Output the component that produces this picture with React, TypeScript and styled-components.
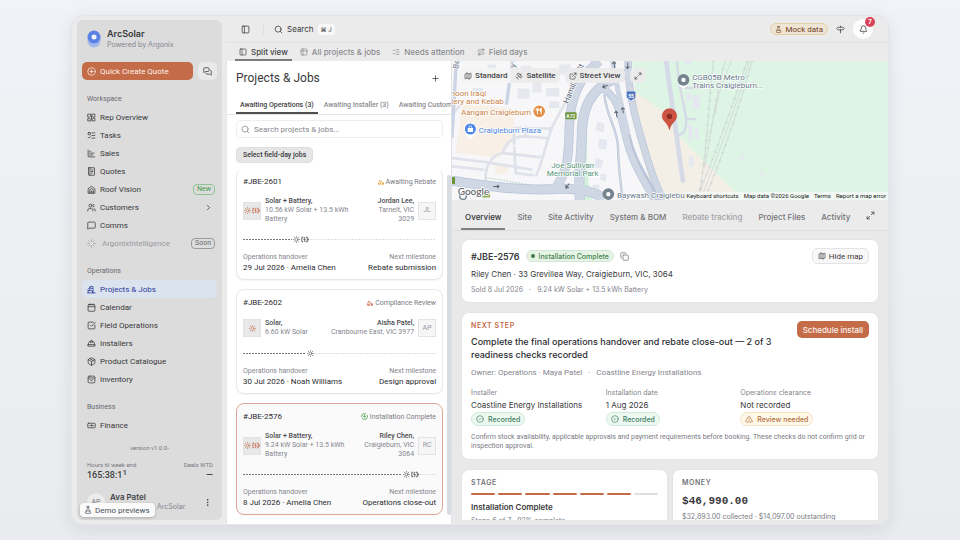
import React from "react";
import styled, { createGlobalStyle, css } from "styled-components";
import {
  Banknote, Bell, Calendar, ChartBar, ChevronRight, CircleCheck, CirclePlus, Copy, EllipsisVertical,
  ExternalLink, FlaskConical, HardHat, ListChecks, ListTodo, Loader, Map as MapIcon, Maximize2,
  MessageSquare, MessagesSquare, Package, PanelLeft, Plus, Route, Satellite, Search, Signpost,
  SquareCheckBig, Table2, TriangleAlert, Users,
} from "lucide-react";

const GlobalStyle = createGlobalStyle`
  * { box-sizing: border-box; }
  body {
    margin: 0;
    background: linear-gradient(#f0f3f7, #eceef1 60%, #e9ebee);
    font-family: Inter, "Liberation Sans", sans-serif;
    color: #3a3a3c;
    font-size: 8px;
  }
  button, input { font: inherit; color: inherit; margin: 0; }
  button { border: 0; padding: 0; background: none; display: inline-flex; align-items: center; justify-content: center; white-space: nowrap; }
  a { color: inherit; text-decoration: none; }
  p, h1, h2, h3, dl, dt, dd, ul { margin: 0; padding: 0; }
  ul { list-style: none; }
  svg { flex: none; display: block; }
`;

const muted = "#85858d";
const rust = "#c46b48";
const compact = css`font-family: Roboto, "Liberation Sans", sans-serif;`;

const Shell = styled.div`
  height: 100vh;
  min-height: 480px;
  padding: 15px 71px;
`;
const Window = styled.div`
  position: relative;
  display: flex;
  height: 100%;
  overflow: hidden;
  border: 1px solid #e3e5e8;
  border-radius: 12px;
  background: #ebebeb;
`;
const WindowShadow = styled.div`
  height: 100%;
  border-radius: 12px;
  box-shadow: 0 4px 16px rgba(70, 80, 95, 0.12);
`;

/* Sidebar */
const Sidebar = styled.aside`
  ${compact}
  display: flex;
  flex-direction: column;
  flex: none;
  width: 145px;
  margin: 4px 4px 4px 5px;
  padding: 6px 5px 8px;
  border-radius: 6px;
  background: #dcdcdc;
`;
const Brand = styled.div`
  display: flex;
  align-items: center;
  gap: 6px;
  height: 26px;
  padding-left: 5px;
  font-family: Inter, sans-serif;
`;
const BrandName = styled.div`
  font-size: 9px;
  line-height: 11px;
  font-weight: 600;
`;
const BrandSub = styled.div`
  font-size: 7px;
  line-height: 11px;
  color: ${muted};
`;
const QuickRow = styled.div`
  display: flex;
  gap: 5px;
  height: 18px;
  margin-top: 10px;
`;
const QuickButton = styled.button`
  flex: 1;
  gap: 4px;
  && { justify-content: flex-start; padding-left: 5px; background: ${rust}; color: #fdf1eb; }
  border-radius: 5px;
`;
const ChatButton = styled.button`
  width: 19px;
  && { background: #e9e9e9; }
  border-radius: 5px;
`;
const NavGroup = styled.nav`
  margin-top: 10px;
`;
const NavLabel = styled.h2`
  padding-left: 5px;
  font-size: 7px;
  line-height: 18px;
  font-weight: 400;
  color: #68686d;
`;
const NavItem = styled.a<{ $active?: boolean; $dim?: boolean }>`
  display: flex;
  align-items: center;
  gap: 4px;
  height: 18px;
  padding: 0 2px 0 5px;
  border-radius: 5px;
  color: #38383b;
  ${(p) => p.$active && css`background: #dbe3ee; color: #2c3a9a;`}
  ${(p) => p.$dim && css`color: #98989c; gap: 6px;`}
  span { flex: 1; white-space: nowrap; }
  span + svg { margin-right: 2px; }
`;
const NavBadge = styled.em<{ $green?: boolean }>`
  padding: 0 3px;
  border: 1px solid ${(p) => (p.$green ? "#8cc490" : "#9b9ba3")};
  border-radius: 4px;
  font-style: normal;
  font-size: 7px;
  line-height: 9px;
  color: ${(p) => (p.$green ? "#479a4e" : "#68686f")};
`;
const Version = styled.div`
  margin-top: auto;
  text-align: center;
  font-size: 6px;
  line-height: 10px;
  color: #77777e;
`;
const Metrics = styled.div`
  display: flex;
  justify-content: space-between;
  padding: 7px 4px 0 5px;
`;
const Metric = styled.div<{ $right?: boolean }>`
  font-size: 6px;
  line-height: 9px;
  color: #77777e;
  text-align: ${(p) => (p.$right ? "right" : "left")};
`;
const MetricValue = styled.strong`
  display: flex;
  font-size: 9px;
  line-height: 12px;
  font-weight: 500;
  color: #3f3f43;
  sup { font-size: 8px; line-height: 8px; }
`;
const DashValue = styled(MetricValue)`
  justify-content: flex-end;
`;
const UserRow = styled.div`
  display: flex;
  align-items: center;
  gap: 5px;
  padding: 11px 5px 0;
`;
const UserAvatar = styled.div`
  display: grid;
  place-items: center;
  width: 18px;
  height: 18px;
  border-radius: 9px;
  background: #ececec;
  font-size: 7px;
  color: #77777c;
`;
const UserText = styled.div`
  flex: 1;
  font: 400 7px/10px Inter, sans-serif;
  white-space: nowrap;
  color: #85858d;
  strong { display: block; font-size: 8px; font-weight: 600; color: #444448; }
  span { display: block; padding-left: 43px; }
`;
const DemoButton = styled.button`
  position: absolute;
  left: 8px;
  bottom: 7px;
  height: 14px;
  gap: 3px;
  && { ${compact} padding: 0 5px 0 4px; background: #fafafa; color: #46515d; }
  border-radius: 4px;
  box-shadow: 0 1px 3px rgba(0, 0, 0, 0.22);
`;

/* Main frame */
const Main = styled.main`
  display: flex;
  flex-direction: column;
  flex: 1;
  min-width: 0;
`;
const TopBar = styled.header`
  display: flex;
  align-items: center;
  flex: none;
  height: 27px;
  padding: 0 15px 0 15px;
  border-bottom: 1px solid #e0e1e4;
`;
const Divider = styled.i`
  width: 1px;
  height: 10px;
  margin: 0 10px 0 13px;
  background: #dcdde0;
`;
const SearchButton = styled.button`
  gap: 4px;
`;
const Kbd = styled.kbd`
  padding: 0 3px;
  border-radius: 3px;
  background: #f8f8f8;
  font-family: inherit;
  font-size: 6px;
  line-height: 11px;
`;
const Spacer = styled.span`
  flex: 1;
`;
const MockPill = styled.span`
  ${compact}
  display: flex;
  align-items: center;
  gap: 3px;
  height: 12px;
  padding: 0 4px;
  margin-right: 8px;
  border: 1px solid #e6cfa6;
  border-radius: 6px;
  background: #efe5d5;
  color: #703f1c;
`;
const BellButton = styled.button`
  position: relative;
  width: 20px;
  height: 20px;
  && { margin-left: 8px; background: #fdfdfd; }
  border-radius: 10px;
`;
const BellCount = styled.b`
  position: absolute;
  top: -2px;
  right: -2px;
  width: 10px;
  border-radius: 5px;
  background: #d94459;
  color: #fff;
  font-size: 6px;
  line-height: 10px;
`;
const ViewTabs = styled.nav`
  display: flex;
  flex: none;
  gap: 4px;
  height: 18px;
  padding-left: 9px;
`;
const ViewTab = styled.a<{ $active?: boolean }>`
  display: flex;
  align-items: center;
  gap: 4px;
  padding: 2px 4px 0;
  font-weight: 500;
  white-space: nowrap;
  color: ${(p) => (p.$active ? "#444448" : "#8b8b90")};
  border-bottom: 2px solid ${(p) => (p.$active ? "#7c7c80" : "transparent")};
`;
const Split = styled.div`
  display: flex;
  flex: 1;
  min-height: 0;
`;

/* Job list */
const ListPane = styled.section`
  ${compact}
  display: flex;
  flex-direction: column;
  flex: 0 0 34%;
  min-width: 0;
  border-left: 1px solid #e6e6e8;
  background: #fff;
`;
const ListHead = styled.div`
  display: flex;
  justify-content: space-between;
  align-items: center;
  flex: none;
  height: 34px;
  padding: 0 11px 0 9px;
  h1 { font-size: 12px; font-weight: 400; }
`;
const QueueTabs = styled.div`
  display: flex;
  flex: none;
  height: 20px;
  gap: 2px;
  padding-left: 9px;
  overflow: hidden;
  border-bottom: 1px solid #e4e4e6;
`;
const QueueTab = styled.button<{ $active?: boolean }>`
  flex: none;
  && {
    padding: 3px 4px 0;
    border-bottom: 2px solid ${(p) => (p.$active ? "#505054" : "transparent")};
    font-size: 7px;
    font-weight: 500;
    color: ${(p) => (p.$active ? "#3f3f43" : "#8b8b90")};
  }
`;
const SearchBox = styled.label`
  display: flex;
  align-items: center;
  flex: none;
  gap: 4px;
  height: 18px;
  margin: 5px 8px 9px 9px;
  padding: 0 4px;
  border: 1px solid #eeeef0;
  border-radius: 5px;
  color: ${muted};
  input { flex: 1; min-width: 0; border: 0; padding: 0; outline: 0; background: none; }
  input::placeholder { color: ${muted}; opacity: 1; }
`;
const SelectButton = styled.button`
  flex: none;
  align-self: flex-start;
  height: 16px;
  && { margin: 0 9px 8px; padding: 0 7px; background: #e6e6e6; font-size: 7px; font-weight: 500; }
  border-radius: 5px;
  box-shadow: inset 0 0 0 1px #dedede;
`;
const ScrollArea = styled.div`
  display: flex;
  flex: 1;
  min-height: 0;
  overflow: hidden;
`;
const Cards = styled.ul`
  display: flex;
  flex-direction: column;
  flex: 1;
  min-width: 0;
  gap: 9px;
  && { margin: -3px 4px 0 9px; }
`;
const ScrollThumb = styled.i`
  width: 4px;
  margin: 4px 0 9px 0;
  border-radius: 2px;
  background: #d6dce2;
`;
const JobCard = styled.li<{ $selected?: boolean }>`
  flex: none;
  padding: 7px 6px 6px;
  border: 1px solid ${(p) => (p.$selected ? "#dfa793" : "#e8e8ea")};
  border-radius: 8px;
  background: ${(p) => (p.$selected ? "#fafafa" : "#fff")};
  box-shadow: 0 1px 1px rgba(0, 0, 0, 0.04);
`;
const JobTop = styled.div`
  display: flex;
  justify-content: space-between;
  align-items: center;
  height: 11px;
  h2 { font-size: 8px; font-weight: 400; color: #2c2c30; }
`;
const JobStatus = styled.span`
  display: flex;
  align-items: center;
  gap: 2px;
  font-size: 7px;
  color: #7b7b84;
`;
const JobBody = styled.div`
  display: flex;
  align-items: center;
  gap: 4px;
  min-height: 20px;
  margin: 10px 0;
  font-size: 7px;
  line-height: 9px;
  color: ${muted};
  strong { display: block; font-weight: 500; color: #4a4a4e; }
`;
const JobText = styled.div`
  max-width: 90px;
  margin-right: auto;
`;
const PlaceText = styled.div<{ $narrow?: boolean }>`
  max-width: ${(p) => (p.$narrow ? "52px" : "none")};
  white-space: ${(p) => (p.$narrow ? "normal" : "nowrap")};
  text-align: right;
`;
const Tile = styled.div<{ $light?: boolean }>`
  display: flex;
  align-items: center;
  justify-content: center;
  flex: none;
  gap: 1px;
  width: 18px;
  height: 18px;
  border: 1px solid #e3e3e5;
  background: ${(p) => (p.$light ? "#f6f6f7" : "#e8e8e8")};
  color: ${(p) => (p.$light ? "#96969c" : rust)};
`;
const Track = styled.div`
  display: flex;
  align-items: center;
  gap: 1px;
  height: 11px;
  color: #4c4c50;
`;
const Dashes = styled.i<{ $grow: number; $faint?: boolean }>`
  flex: ${(p) => p.$grow} 1 0;
  height: 1px;
  background: repeating-linear-gradient(90deg, ${(p) => (p.$faint ? "#dfdfe1" : "#77777b")} 0 2px, transparent 2px 3px);
`;
const JobFoot = styled.dl`
  display: flex;
  justify-content: space-between;
  && { margin-top: 8px; }
  div:last-child { text-align: right; }
  dt { font-size: 7px; line-height: 9px; color: ${muted}; }
  dd { font-size: 8px; line-height: 11px; color: #2c2c30; }
`;

/* Detail */
const Detail = styled.section`
  display: flex;
  flex-direction: column;
  flex: 1;
  min-width: 0;
  border-left: 1px solid #dfe2e6;
  background: #e9e9e9;
`;
const MapBox = styled.div`
  position: relative;
  flex: none;
  height: 139px;
  overflow: hidden;
  background: #def5e5;
`;
const MapControls = styled.div`
  ${compact}
  position: absolute;
  top: 7px;
  left: 8px;
  display: flex;
  gap: 5px;
`;
const ControlGroup = styled.div`
  display: flex;
  border-radius: 5px;
  background: #ececec;
  opacity: 0.95;
  overflow: hidden;
`;
const MapControl = styled.button<{ $active?: boolean }>`
  gap: 3px;
  height: 15px;
  && { padding: 0 4px; background: ${(p) => (p.$active ? "#f5f5f5" : "transparent")}; font-weight: 500; }
`;
const MapLegal = styled.div`
  position: absolute;
  right: 0;
  bottom: 0;
  display: flex;
  gap: 5px;
  padding: 0 2px;
  background: rgba(245, 248, 246, 0.85);
  font: 400 6px/8px Roboto, sans-serif;
  color: #1b1b1b;
`;
const DetailTabs = styled.nav`
  display: flex;
  align-items: stretch;
  flex: none;
  height: 31px;
  gap: 8px;
  padding: 0 13px 0 9px;
  border-bottom: 1px solid #dedee0;
  background: #ebebeb;
`;
const DetailTab = styled.a<{ $active?: boolean; $dim?: boolean }>`
  display: flex;
  align-items: center;
  padding: 5px 4px 0;
  border-bottom: 2px solid ${(p) => (p.$active ? "#808084" : "transparent")};
  font-weight: 500;
  white-space: nowrap;
  color: ${(p) => (p.$active ? "#303034" : p.$dim ? "#a3a3a8" : "#737378")};
`;
const ExpandButton = styled.button`
  && { margin-left: auto; }
`;
const DetailBody = styled.div`
  display: flex;
  flex-direction: column;
  flex: 1;
  min-height: 0;
  gap: 9px;
  margin: 8px 9px 4px;
  overflow: hidden;
`;
const Card = styled.article`
  flex: none;
  min-width: 0;
  padding: 8px 9px 7px;
  border: 1px solid #e4e4e6;
  border-radius: 8px;
  background: #fff;
`;
const CardHead = styled.div`
  display: flex;
  justify-content: space-between;
  align-items: flex-start;
`;
const JobTitle = styled.div`
  display: flex;
  align-items: center;
  gap: 6px;
  height: 16px;
  h2 { font-size: 9px; font-weight: 600; }
`;
const CopyButton = styled.button`
  && { color: #77777f; }
`;
const StatusPill = styled.span<{ $tone: "green" | "mint" | "amber" }>`
  display: inline-flex;
  align-items: center;
  gap: 4px;
  height: ${(p) => (p.$tone === "green" ? "12px" : "14px")};
  padding: 0 4px;
  border: 1px solid ${(p) => ({ green: "#d3e8d4", mint: "#cfe9da", amber: "#f3e3c2" })[p.$tone]};
  border-radius: 7px;
  background: ${(p) => ({ green: "#e6f3e6", mint: "#edf8f1", amber: "#fef8e9" })[p.$tone]};
  color: ${(p) => ({ green: "#44834b", mint: "#3f8064", amber: "#b4703c" })[p.$tone]};
  && { font-size: 7px; }
  font-weight: 500;
`;
const Dot = styled.i`
  width: 4px;
  height: 4px;
  border-radius: 2px;
  background: #3b7d44;
`;
const HideMap = styled.button`
  gap: 3px;
  height: 16px;
  && { ${compact} padding: 0 5px; background: #f8f8f8; border: 1px solid #e4e4e6; }
  border-radius: 5px;
`;
const Address = styled.p`
  && { margin-top: 4px; }
  font-size: 8px;
  line-height: 13px;
`;
const Meta = styled.p<{ $small?: boolean }>`
  display: flex;
  gap: 6px;
  color: ${muted};
  ${(p) => (p.$small
    ? css`&& { margin-top: 4px; } font-size: 7px; line-height: 10px;`
    : css`&& { margin-top: 6px; } ${compact} font-size: 8px; line-height: 12px;`)}
`;
const Eyebrow = styled.h3<{ $rust?: boolean }>`
  font-size: 7px;
  line-height: 9px;
  font-weight: 600;
  letter-spacing: 0.08em;
  color: ${(p) => (p.$rust ? rust : "#73737a")};
`;
const StepTitle = styled.h2`
  && { margin-top: 5px; }
  max-width: 310px;
  font-size: 9px;
  line-height: 13px;
  font-weight: 500;
  color: #2c2c30;
`;
const ScheduleButton = styled.button`
  height: 17px;
  && { padding: 0 6px; background: ${rust}; color: #fdf3ee; font-weight: 500; }
  border-radius: 5px;
`;
const Checks = styled.dl`
  display: grid;
  grid-template-columns: repeat(3, 1fr);
  gap: 6px;
  && { margin-top: 8px; }
  dt { font-size: 7px; line-height: 12px; color: ${muted}; }
  dd { font-size: 8px; line-height: 13px; }
  div { display: flex; flex-direction: column; align-items: flex-start; }
`;
const Note = styled.p`
  ${compact}
  && { margin-top: 7px; padding-bottom: 1px; }
  font-size: 7px;
  line-height: 9px;
  color: #7b7b84;
`;
const Pair = styled.div`
  display: grid;
  grid-template-columns: 1fr 1fr;
  flex: none;
  gap: 4px;
`;
const Steps = styled.div`
  display: flex;
  gap: 3px;
  margin: 6px 0;
`;
const Step = styled.i<{ $done: boolean }>`
  flex: 1;
  height: 2px;
  border-radius: 1px;
  background: ${(p) => (p.$done ? rust : "#dbe0e5")};
`;
const StageName = styled.p`
  font-size: 8px;
  line-height: 12px;
  font-weight: 600;
`;
const Small = styled.p`
  && { margin-top: 2px; }
  font-size: 7px;
  line-height: 11px;
  color: #7b7b84;
`;
const Amount = styled.p`
  && { margin: 7px 0 3px; }
  font: 700 11px/14px "Liberation Mono", monospace;
`;

type IconProps = { size?: number };
const stroke = { fill: "none", stroke: "currentColor", strokeWidth: 2, strokeLinecap: "round", strokeLinejoin: "round" } as const;

const OverviewIcon = ({ size = 9 }: IconProps) => (
  <svg width={size} height={size} viewBox="0 0 24 24" {...stroke}>
    <path d="M3 3h7v5l-3 3H3zM14 3h7v8h-5l-2-2zM3 15h4l3 2v4H3zM14 15l3-1h4v7h-7zM12 8v8" />
  </svg>
);
const QuoteIcon = ({ size = 9 }: IconProps) => (
  <svg width={size} height={size} viewBox="0 0 24 24" {...stroke}>
    <rect x="4" y="2" width="16" height="20" rx="1" /><path d="M8 2v20M12 8h4M12 12h4M12 16h2" />
  </svg>
);
const CraneIcon = ({ size = 9 }: IconProps) => (
  <svg width={size} height={size} viewBox="0 0 24 24" {...stroke}>
    <path d="M2 21h20M3 15h12v6M3 15v6M6 15l3-11h7v17M9 9h6M3 11l6-7" />
  </svg>
);
const RoofIcon = ({ size = 9 }: IconProps) => (
  <svg width={size} height={size} viewBox="0 0 24 24" {...stroke}>
    <path d="M3 21V10l9-7 9 7v11zM7 21v-6a5 5 0 0 1 10 0v6M11 21v-5h2v5" />
  </svg>
);
const BagIcon = ({ size = 9 }: IconProps) => (
  <svg width={size} height={size} viewBox="0 0 24 24" {...stroke}>
    <rect x="3" y="3" width="18" height="18" rx="3" /><path d="M3 8h18M8 12c1 4 7 4 8 0" />
  </svg>
);
const SunIcon = ({ size = 7 }: IconProps) => (
  <svg width={size} height={size} viewBox="0 0 24 24" {...stroke}>
    <circle cx="12" cy="12" r="5" /><path d="M12 1v2M12 21v2M1 12h2M21 12h2M4 4l2 2M18 18l2 2M4 20l2-2M18 6l2-2" />
  </svg>
);
const BatteryIcon = () => (
  <svg width="8" height="7" viewBox="0 0 28 24" {...stroke} strokeWidth="3">
    <path d="M7 4H3v16h3M18 4h4v16h-4M13 5l-3 7h5l-3 7M26 10v4" />
  </svg>
);
const RebateIcon = ({ color }: { color: string }) => (
  <svg width="6" height="6" viewBox="0 0 24 24" fill="none" stroke={color} strokeWidth="4">
    <path d="M3 7a12 12 0 0 1 15 12M3 13v8h6v-7M21 14v7h-6" />
  </svg>
);
const DoneIcon = () => (
  <svg width="7" height="7" viewBox="0 0 24 24" fill="none" stroke="#4aa352" strokeWidth="3">
    <circle cx="12" cy="12" r="10" strokeDasharray="24 4" /><path d="M12 6v8M8 11l4 4 4-4" />
  </svg>
);
const Logo = () => (
  <svg width="14" height="18" viewBox="0 0 28 36">
    <path d="M1 16h26v6a13 13 0 0 1-26 0z" fill="#a3b9ec" />
    <circle cx="14" cy="14" r="13" fill="#5b82e2" />
    <circle cx="14" cy="14" r="5" fill="#f1f4fc" />
  </svg>
);

const MapDrawing = () => (
  <svg width="100%" height="100%" viewBox="9 9 1305 417" preserveAspectRatio="xMidYMid slice" fontFamily="Roboto, sans-serif">
    <rect x="9" y="9" width="1305" height="417" fill="#def5e5" />
    <path d="M9 9H548L560 130 640 426H9z" fill="#f7f7f9" />
    <path d="M545 95L650 165 685 232 880 426H620L560 240z" fill="#f3efe6" />
    <path d="M40 140L190 150 200 240 150 300 20 285z" fill="#f8f0e7" />
    <path d="M135 320L175 315V345L140 350z" fill="#f8f0e7" />
    <path d="M405 170C425 240 400 330 430 426H385V210z" fill="#d4f1dc" />
    <g fill="#e6e8ef">
      <path d="M60 30h40v34H60zM115 20h26v24H115zM205 92h36v30H205zM250 70h26v34H250zM290 90h40v26H290zM300 130h30v20H300zM215 24h30v20H215zM330 20h34v30H330zM70 90h32v14H70zM445 190l22 8-6 26-22-8zM450 240l24 6-4 30-24-6zM440 300l22 8-6 24-22-6zM455 345l18 6-4 20-18-6zM430 380h20v22H430z" />
      <path d="M708 10h16v12H708zM710 105h16v24H710zM730 112h20v44H730zM716 202h12v44H716zM735 212h12v30H735zM718 295h14v30H718z" />
      <path d="M873 290h8v16h-8zM934 340h8v16h-8z" />
    </g>
    <g fill="none" stroke="#dfe2ea" strokeWidth="8">
      <path d="M9 300L110 312 250 335M110 370C105 310 140 290 160 285L275 298M160 285C175 240 205 235 225 235L295 240M195 260V210L305 212M230 240V205M195 265L200 345 255 352M9 325L105 335M9 170L35 140M260 355C285 300 290 250 310 205L350 130" />
    </g>
    <path d="M22 9L9 240M190 9L172 140" fill="none" stroke="#cbd4e4" strokeWidth="10" />
    <g fill="none" strokeLinecap="butt">
      <g stroke="#b9c4d8">
        <path d="M9 368C120 385 230 400 330 392 390 390 440 400 470 426" strokeWidth="30" />
        <path d="M450 9C385 60 362 130 360 210S358 340 315 395" strokeWidth="28" />
        <path d="M540 45C440 75 400 130 398 220S385 350 392 426" strokeWidth="30" />
        <path d="M450 90C500 100 515 170 530 240S580 360 615 426" strokeWidth="22" />
        <path d="M490 9C500 90 520 150 536 230S595 360 625 426" strokeWidth="14" />
        <path d="M536 9C535 120 570 220 590 290S620 380 640 426" strokeWidth="22" />
        <path d="M465 110C475 190 505 210 506 270S515 380 520 426" strokeWidth="7" />
      </g>
      <g stroke="#cfd7e5">
        <path d="M9 368C120 385 230 400 330 392 390 390 440 400 470 426" strokeWidth="26" />
        <path d="M450 9C385 60 362 130 360 210S358 340 315 395" strokeWidth="24" />
        <path d="M540 45C440 75 400 130 398 220S385 350 392 426" strokeWidth="26" />
        <path d="M450 90C500 100 515 170 530 240S580 360 615 426" strokeWidth="18" />
        <path d="M490 9C500 90 520 150 536 230" strokeWidth="14" />
        <path d="M536 9C535 120 570 220 590 290S620 380 640 426" strokeWidth="18" />
        <path d="M465 110C475 190 505 210 506 270S515 380 520 426" strokeWidth="4" />
      </g>
    </g>
    <path d="M650 9L700 368" stroke="#d5dae6" strokeWidth="14" strokeLinecap="round" />
    <path d="M683 9C684 90 710 150 710 190 710 220 700 228 686 232M710 183H738M695 90H760" fill="none" stroke="#d5dae6" strokeWidth="7" />
    <g fill="none" stroke="#c9cfd0" strokeWidth="2">
      <path d="M893 9C850 140 800 280 748 407M901 9C860 140 810 280 760 407M908 9C868 150 820 290 772 407M792 9C778 120 775 250 750 407M826 9C800 110 780 250 765 330M845 9C815 80 800 130 797 170" />
      <path d="M893 9C850 140 800 280 748 407M908 9C868 150 820 290 772 407M792 9C778 120 775 250 750 407M826 9C800 110 780 250 765 330" strokeWidth="9" strokeDasharray="2 22" />
    </g>
    <path d="M110 358L240 380" stroke="#8cc9a4" strokeWidth="2" strokeDasharray="5 4" />
    <g fill="none" stroke="#5c6675" strokeWidth="3">
      <path d="M132 385H150M144 380l6 5-6 5M360 376l-10 14M350 380v10l9-2M503 178l-3-18M495 166l5-6 6 5M522 166l-2-16M515 155l5-6 6 5M496 30l-2-16M489 18l5-6 6 5M535 14v18M529 26l6 6 5-6M475 82l-14 6M465 80l-5 8 9 3" />
    </g>
    <rect x="348" y="163" width="34" height="21" rx="3" fill="#6c9438" /><text x="365" y="179" fontSize="15" fontWeight="700" fill="#fff" textAnchor="middle">A72</text>
    <rect x="9" y="357" width="9" height="21" fill="#6c9438" /><rect x="100" y="400" width="23" height="18" fill="#8fb05c" />
    <path d="M532 101h26v18l-13 9-13-9z" fill="#4d73bd" /><text x="545" y="119" fontSize="15" fontWeight="700" fill="#fff" textAnchor="middle">55</text>
    <g stroke="#fff" strokeWidth="4" paintOrder="stroke" strokeLinejoin="round" fontSize="24">
      <text transform="translate(28 34) rotate(-82)" fill="#68748a">Be</text>
      <text transform="translate(197 30) rotate(-75)" fill="#68748a">y C</text>
      <text transform="translate(356 138) rotate(-67)" fill="#4f5c70">Hamilton St</text>
      <g fill="#c9803f">
        <text x="5" y="113">noon Iraqi</text><text x="5" y="137">tery and Kebab</text><text x="36" y="170">Aangan Craigieburn</text>
      </g>
      <text x="89" y="224" fill="#4b86de">Craigieburn Plaza</text>
      <g fill="#549578" textAnchor="middle"><text x="370" y="331">Joe Sullivan</text><text x="370" y="355">Memorial Park</text></g>
      <g fill="#66788a"><text x="728" y="65">CGB05B Metro</text><text x="728" y="89">Trains Craigieburn...</text><text x="503" y="420">Baywash Craigiebur</text></g>
    </g>
    <path d="M251 174h36l-17 15z" fill="#fff" /><circle cx="270" cy="160" r="19" fill="#e28e46" stroke="#fff" strokeWidth="3" />
    <path d="M265 151v18M261 151v6h8v-6M276 169v-18c-4 3-4 9 0 10" fill="none" stroke="#fff" strokeWidth="3" />
    <path d="M46 228h36l-18 15z" fill="#fff" /><circle cx="64" cy="213" r="18" fill="#4b86e6" stroke="#fff" strokeWidth="3" />
    <path d="M56 210h16v12H56z" fill="#fff" /><path d="M60 210v-3a4 4 0 0 1 8 0v3" fill="none" stroke="#fff" strokeWidth="2" />
    <path d="M686 80h32l-16 13z" fill="#fff" /><circle cx="702" cy="66" r="12" fill="#fff" stroke="#75838f" strokeWidth="11" />
    <path d="M461 421h32l-16 13z" fill="#fff" /><circle cx="477" cy="408" r="12" fill="#fff" stroke="#75838f" strokeWidth="11" />
    <circle cx="42" cy="414" r="10" fill="none" stroke="#7d8b99" strokeWidth="5" />
    <path d="M660 216C656 194 638 190 638 174a22 22 0 0 1 44 0c0 16-18 20-22 42z" fill="#cd5443" stroke="#b9402f" strokeWidth="1" />
    <circle cx="660" cy="175" r="8" fill="#8c2b22" />
    <text x="26" y="412" fontSize="30" fontWeight="500" fill="#5a5d61" stroke="#fff" strokeWidth="5" paintOrder="stroke" fontFamily="Lato, sans-serif">Google</text>
  </svg>
);

type Job = {
  id: string; status: string; icon: React.ReactNode; battery?: boolean; system: string; spec: string;
  name: string; place: string; initials: string; progress: number; handover: string; next: string; selected?: boolean;
};
const jobs: Job[] = [
  { id: "#JBE-2601", status: "Awaiting Rebate", icon: <RebateIcon color="#e59a36" />, battery: true, system: "Solar + Battery,", spec: "10.56 kW Solar + 13.5 kWh Battery", name: "Jordan Lee,", place: "Tarneit, VIC 3029", initials: "JL", progress: 28, handover: "29 Jul 2026 · Amelia Chen", next: "Rebate submission" },
  { id: "#JBE-2602", status: "Compliance Review", icon: <RebateIcon color="#cf5f3d" />, system: "Solar,", spec: "6.60 kW Solar", name: "Aisha Patel,", place: "Cranbourne East, VIC 3977", initials: "AP", progress: 34, handover: "30 Jul 2026 · Noah Williams", next: "Design approval" },
  { id: "#JBE-2576", status: "Installation Complete", icon: <DoneIcon />, battery: true, system: "Solar + Battery,", spec: "9.24 kW Solar + 13.5 kWh Battery", name: "Riley Chen,", place: "Craigieburn, VIC 3064", initials: "RC", progress: 91, handover: "8 Jul 2026 · Amelia Chen", next: "Operations close-out", selected: true },
];

const JobEntry = ({ job }: { job: Job }) => (
  <JobCard $selected={job.selected}>
    <JobTop><h2>{job.id}</h2><JobStatus>{job.icon}{job.status}</JobStatus></JobTop>
    <JobBody>
      <Tile><SunIcon />{job.battery && <BatteryIcon />}</Tile>
      <JobText><strong>{job.system}</strong>{job.spec}</JobText>
      <PlaceText $narrow={job.battery}><strong>{job.name}</strong>{job.place}</PlaceText>
      <Tile $light>{job.initials}</Tile>
    </JobBody>
    <Track>
      <Dashes $grow={job.progress} /><SunIcon />{job.battery && <BatteryIcon />}<Dashes $grow={100 - job.progress} $faint />
    </Track>
    <JobFoot>
      <div><dt>Operations handover</dt><dd>{job.handover}</dd></div>
      <div><dt>Next milestone</dt><dd>{job.next}</dd></div>
    </JobFoot>
  </JobCard>
);

const Recorded = () => <StatusPill as="dd" $tone="mint"><CircleCheck size={8} />Recorded</StatusPill>;

export default function App() {
  return (
    <Shell>
      <GlobalStyle />
      <WindowShadow>
        <Window>
          <Sidebar>
            <Brand><Logo /><div><BrandName>ArcSolar</BrandName><BrandSub>Powered by Argonix</BrandSub></div></Brand>
            <QuickRow>
              <QuickButton><CirclePlus size={9} />Quick Create Quote</QuickButton>
              <ChatButton aria-label="Messages"><MessagesSquare size={9} /></ChatButton>
            </QuickRow>
            <NavGroup>
              <NavLabel>Workspace</NavLabel>
              <NavItem href="#"><OverviewIcon /><span>Rep Overview</span></NavItem>
              <NavItem href="#"><ListTodo size={9} /><span>Tasks</span></NavItem>
              <NavItem href="#"><ChartBar size={9} /><span>Sales</span></NavItem>
              <NavItem href="#"><QuoteIcon /><span>Quotes</span></NavItem>
              <NavItem href="#"><RoofIcon /><span>Roof Vision</span><NavBadge $green>New</NavBadge></NavItem>
              <NavItem href="#"><Users size={9} /><span>Customers</span><ChevronRight size={9} /></NavItem>
              <NavItem href="#"><MessageSquare size={9} /><span>Comms</span></NavItem>
              <NavItem href="#" $dim><Loader size={9} /><span>ArgonixIntelligence</span><NavBadge>Soon</NavBadge></NavItem>
            </NavGroup>
            <NavGroup>
              <NavLabel>Operations</NavLabel>
              <NavItem href="#" $active><CraneIcon /><span>Projects &amp; Jobs</span></NavItem>
              <NavItem href="#"><Calendar size={9} /><span>Calendar</span></NavItem>
              <NavItem href="#"><SquareCheckBig size={9} /><span>Field Operations</span></NavItem>
              <NavItem href="#"><HardHat size={9} /><span>Installers</span></NavItem>
              <NavItem href="#"><Package size={9} /><span>Product Catalogue</span></NavItem>
              <NavItem href="#"><BagIcon /><span>Inventory</span></NavItem>
            </NavGroup>
            <NavGroup>
              <NavLabel>Business</NavLabel>
              <NavItem href="#"><Banknote size={9} /><span>Finance</span></NavItem>
            </NavGroup>
            <Version>version v1.0.0-</Version>
            <Metrics>
              <Metric>Hours til week end<MetricValue>165:38:1<sup>1</sup></MetricValue></Metric>
              <Metric $right>Deals WTD<DashValue>—</DashValue></Metric>
            </Metrics>
            <UserRow>
              <UserAvatar>AP</UserAvatar>
              <UserText><strong>Ava Patel</strong><span>· ArcSolar</span></UserText>
              <button aria-label="Account menu"><EllipsisVertical size={9} /></button>
            </UserRow>
          </Sidebar>

          <Main>
            <TopBar>
              <button aria-label="Toggle sidebar"><PanelLeft size={9} /></button>
              <Divider />
              <SearchButton><Search size={9} />Search <Kbd>⌘ J</Kbd></SearchButton>
              <Spacer />
              <MockPill><FlaskConical size={7} />Mock data</MockPill>
              <button aria-label="Guide"><Signpost size={9} /></button>
              <BellButton aria-label="Notifications"><Bell size={9} /><BellCount>7</BellCount></BellButton>
            </TopBar>
            <ViewTabs>
              <ViewTab href="#" $active><PanelLeft size={8} />Split view</ViewTab>
              <ViewTab href="#"><Table2 size={8} />All projects &amp; jobs</ViewTab>
              <ViewTab href="#"><ListChecks size={8} />Needs attention</ViewTab>
              <ViewTab href="#"><Route size={8} />Field days</ViewTab>
            </ViewTabs>
            <Split>
              <ListPane>
                <ListHead><h1>Projects &amp; Jobs</h1><button aria-label="Add project"><Plus size={9} /></button></ListHead>
                <QueueTabs>
                  <QueueTab $active>Awaiting Operations (3)</QueueTab>
                  <QueueTab>Awaiting Installer (3)</QueueTab>
                  <QueueTab>Awaiting Customer (2)</QueueTab>
                </QueueTabs>
                <SearchBox><Search size={9} /><input aria-label="Search projects and jobs" placeholder="Search projects & jobs..." /></SearchBox>
                <SelectButton>Select field-day jobs</SelectButton>
                <ScrollArea>
                  <Cards>{jobs.map((job) => <JobEntry key={job.id} job={job} />)}</Cards>
                  <ScrollThumb />
                </ScrollArea>
              </ListPane>

              <Detail>
                <MapBox>
                  <MapDrawing />
                  <MapControls>
                    <ControlGroup>
                      <MapControl $active><MapIcon size={8} />Standard</MapControl>
                      <MapControl><Satellite size={8} />Satellite</MapControl>
                    </ControlGroup>
                    <ControlGroup><MapControl><ExternalLink size={8} />Street View</MapControl></ControlGroup>
                    <ControlGroup><MapControl aria-label="Expand map"><Maximize2 size={8} /></MapControl></ControlGroup>
                  </MapControls>
                  <MapLegal>
                    <a href="#">Keyboard shortcuts</a><span>Map data ©2026 Google</span><a href="#">Terms</a><a href="#">Report a map error</a>
                  </MapLegal>
                </MapBox>
                <DetailTabs>
                  <DetailTab href="#" $active>Overview</DetailTab>
                  <DetailTab href="#">Site</DetailTab>
                  <DetailTab href="#">Site Activity</DetailTab>
                  <DetailTab href="#">System &amp; BOM</DetailTab>
                  <DetailTab href="#" $dim>Rebate tracking</DetailTab>
                  <DetailTab href="#">Project Files</DetailTab>
                  <DetailTab href="#">Activity</DetailTab>
                  <ExpandButton aria-label="Expand details"><Maximize2 size={9} /></ExpandButton>
                </DetailTabs>
                <DetailBody>
                  <Card>
                    <CardHead>
                      <JobTitle>
                        <h2>#JBE-2576</h2>
                        <StatusPill $tone="green"><Dot />Installation Complete</StatusPill>
                        <CopyButton aria-label="Copy job number"><Copy size={9} /></CopyButton>
                      </JobTitle>
                      <HideMap><MapIcon size={8} />Hide map</HideMap>
                    </CardHead>
                    <Address>Riley Chen · 33 Grevillea Way, Craigieburn, VIC, 3064</Address>
                    <Meta $small><span>Sold 8 Jul 2026</span><span>·</span><span>9.24 kW Solar + 13.5 kWh Battery</span></Meta>
                  </Card>
                  <Card>
                    <CardHead>
                      <div>
                        <Eyebrow $rust>NEXT STEP</Eyebrow>
                        <StepTitle>Complete the final operations handover and rebate close-out — 2 of 3 readiness checks recorded</StepTitle>
                      </div>
                      <ScheduleButton>Schedule install</ScheduleButton>
                    </CardHead>
                    <Meta><span>Owner: Operations · Maya Patel</span><span>·</span><span>Coastline Energy Installations</span></Meta>
                    <Checks>
                      <div><dt>Installer</dt><dd>Coastline Energy Installations</dd><Recorded /></div>
                      <div><dt>Installation date</dt><dd>1 Aug 2026</dd><Recorded /></div>
                      <div><dt>Operations clearance</dt><dd>Not recorded</dd><StatusPill as="dd" $tone="amber"><TriangleAlert size={8} />Review needed</StatusPill></div>
                    </Checks>
                    <Note>Confirm stock availability, applicable approvals and payment requirements before booking. These checks do not confirm grid or inspection approval.</Note>
                  </Card>
                  <Pair>
                    <Card>
                      <Eyebrow>STAGE</Eyebrow>
                      <Steps>{[1, 2, 3, 4, 5, 6, 7].map((n) => <Step key={n} $done={n < 7} />)}</Steps>
                      <StageName>Installation Complete</StageName>
                      <Small>Stage 6 of 7 · 92% complete</Small>
                    </Card>
                    <Card>
                      <Eyebrow>MONEY</Eyebrow>
                      <Amount>$46,990.00</Amount>
                      <Small>$32,893.00 collected · $14,097.00 outstanding</Small>
                    </Card>
                  </Pair>
                </DetailBody>
              </Detail>
            </Split>
          </Main>
          <DemoButton><FlaskConical size={8} />Demo previews</DemoButton>
        </Window>
      </WindowShadow>
    </Shell>
  );
}
